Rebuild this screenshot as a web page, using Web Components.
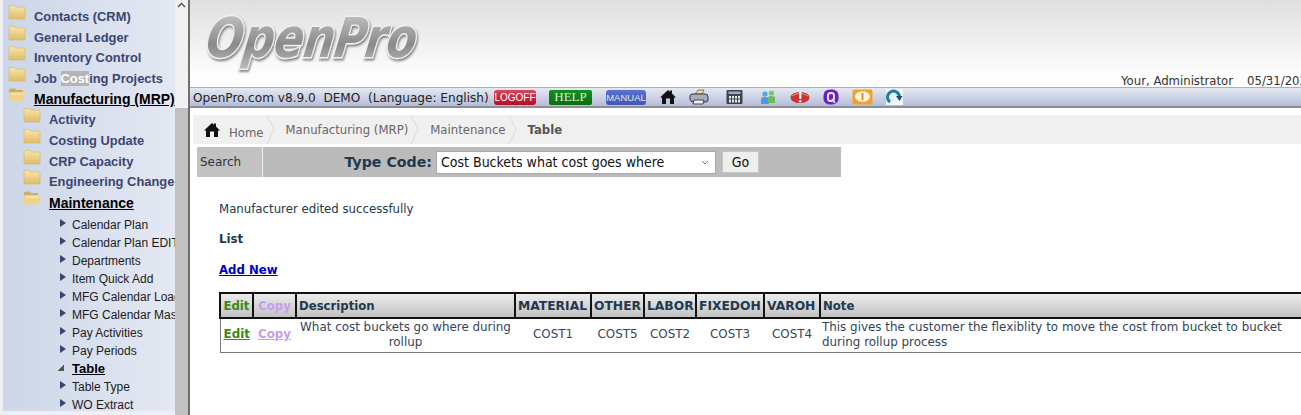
<!DOCTYPE html>
<html>
<head>
<meta charset="utf-8">
<title>OpenPro</title>
<style>
  html, body { margin: 0; height: 415px; overflow: hidden; background: #fff; }
  body { display: flex; font-family: "DejaVu Sans", sans-serif; }
  main-pane { flex: 1; min-width: 0; }
</style>
</head>
<body>
<nav-tree></nav-tree>
<main-pane>
  <top-header></top-header>
  <tool-bar></tool-bar>
  <bread-crumbs></bread-crumbs>
  <search-bar></search-bar>
  <page-body></page-body>
</main-pane>

<script>
const homeIcon = `<path d="M8 1 L10 2.8 V1.5 H12 V4.6 L16 8.4 H14 V15 H10 V9.5 H6 V15 H2 V8.4 H0 Z" fill="#111"/>`;

class NavTree extends HTMLElement {
    constructor() {
        super();
        this.attachShadow({ mode: "open" });
    }

    folder(open) {
        if (open) {
            return `<svg width="18" height="15" viewBox="0 0 18 15"><path d="M1 2 L2 0.5 H7 L8 2 H15 V5 H1 Z" fill="#c9ad6a"/><path d="M1 13.5 V5 Q1 4 3 4 H16 Q18 4 17 6 L15.5 13.5 Z" fill="#eed48a"/><path d="M3 6 H16" stroke="#fbeebb"/></svg>`;
        }
        return `<svg width="18" height="15" viewBox="0 0 18 15"><defs><linearGradient id="f" x1="0" y1="0" x2="0" y2="1"><stop offset="0" stop-color="#f8e6a8"/><stop offset="1" stop-color="#dfbd68"/></linearGradient></defs><path d="M1 1.5 Q1 0.5 2 0.5 H7 L8 2 H16 Q17 2 17 3 V14 H1 Z" fill="url(#f)" stroke="#d2b46c" stroke-width=".6"/></svg>`;
    }

    connectedCallback() {
        const top = ["Contacts (CRM)", "General Ledger", "Inventory Control"];
        const sub = ["Activity", "Costing Update", "CRP Capacity", "Engineering Change"];
        const leaves = ["Calendar Plan", "Calendar Plan EDIT", "Departments", "Item Quick Add", "MFG Calendar Load", "MFG Calendar Master", "Pay Activities", "Pay Periods"];
        const row = (cls, label, open) => `<div class="row ${cls}${open ? " open" : ""}"><span class="ic">${this.folder(open)}</span><a>${label}</a></div>`;
        const leaf = (label) => `<div class="leaf"><i></i><span>${label}</span></div>`;
        this.shadowRoot.innerHTML = `
            <style>
                :host { display: flex; flex: none; width: 190px; height: 415px; box-sizing: border-box; border-right: 2px solid #6f6f6f; background: #f1f1f1; }
                .tree { width: 175px; height: 100%; overflow: hidden; box-sizing: border-box; padding: 6px 0 0 0; border-left: 3px solid #eef0f5;
                    background: linear-gradient(transparent 410px, #edf0f6 412px), linear-gradient(90deg, #ccd6e8, #e4e8f3); font-family: "Liberation Sans", Arial, sans-serif; }
                .row { display: flex; height: 20.7px; align-items: center; white-space: nowrap; font-weight: bold; font-size: 12.9px; color: #3b4572; }
                .row .ic { width: 26px; flex: none; display: flex; margin-left: 5px; position: relative; top: -4px; }
                .row.l2 { padding-left: 15px; }
                .row.open a { color: #000; text-decoration: underline; font-size: 14px; }
                .leaves { padding: 3px 0 0 57px; }
                .leaf { display: flex; align-items: center; height: 18px; white-space: nowrap; font-size: 12px; color: #1c1c1c; }
                .leaf i { flex: none; width: 0; height: 0; margin: -3px 6px 0 0; border-left: 6px solid #33486e; border-top: 4.5px solid transparent; border-bottom: 4.5px solid transparent; }
                .leaf.on i { width: 6px; height: 7px; border: 0; background: linear-gradient(135deg, transparent 50%, #555 50%); margin: -2px 8px 0 -2px; }
                .leaf.on span { font-weight: bold; font-size: 13px; color: #000; text-decoration: underline; }
                .bar { flex: none; width: 13px; background: #f1f1f1; display: flex; flex-direction: column; }
                .arrow { height: 108px; display: flex; justify-content: center; padding-top: 2px; box-sizing: border-box; }
                .thumb { flex: 1; background: #c1c1c1; }
            </style>
            <div class="tree">
                ${top.map((t) => row("l1", t)).join("")}
                <div class="row l1"><span class="ic">${this.folder()}</span><a>Job <span style="background:#b4b4b4;color:#fff">Cost</span>ing Projects</a></div>
                ${row("l1", "Manufacturing (MRP)", true)}
                ${sub.map((t) => row("l2", t)).join("")}
                ${row("l2", "Maintenance", true)}
                <div class="leaves">
                    ${leaves.map(leaf).join("")}
                    <div class="leaf on"><i></i><span>Table</span></div>
                    ${leaf("Table Type")}
                    ${leaf("WO Extract")}
                </div>
            </div>
            <div class="bar">
                <div class="arrow"><svg width="9" height="6" viewBox="0 0 9 6"><path d="M1 5 L4.5 1.5 L8 5" fill="none" stroke="#505050" stroke-width="1.4"/></svg></div>
                <div class="thumb"></div>
            </div>
        `;
    }
}

class TopHeader extends HTMLElement {
    constructor() {
        super();
        this.attachShadow({ mode: "open" });
    }

    connectedCallback() {
        this.shadowRoot.innerHTML = `
            <style>
                :host { display: flex; height: 87px; justify-content: space-between; align-items: flex-end;
                    background: linear-gradient(#dfdfdf, #fdfdfd 85%); overflow: hidden; }
                svg { display: block; margin-left: 8px; margin-bottom: 5px; }
                .user { flex: none; display: flex; gap: 14px; width: 180px; white-space: nowrap; font-size: 11.7px; color: #333; line-height: 13px; margin-bottom: -1px; }
            </style>
            <svg width="230" height="78" viewBox="0 0 230 78">
                <defs><linearGradient id="lg" x1="0" y1="0" x2="0" y2="1"><stop offset="0" stop-color="#cfcfcf"/><stop offset=".6" stop-color="#8a8a8a"/><stop offset="1" stop-color="#bdbdbd"/></linearGradient>
                <filter id="sh" x="-5%" y="-5%" width="110%" height="125%"><feDropShadow dx="1" dy="2" stdDeviation="1.2" flood-color="#555" flood-opacity=".7"/></filter></defs>
                <g filter="url(#sh)"><text transform="skewX(-8)" x="14" y="53" font-family="DejaVu Sans" font-weight="bold" font-style="italic" font-size="55" textLength="210" lengthAdjust="spacingAndGlyphs" fill="url(#lg)" stroke="#f0f0f0" stroke-width="3" paint-order="stroke">OpenPro</text></g>
            </svg>
            <div class="user"><span>Your, Administrator</span><span>05/31/2021</span></div>
        `;
    }
}

class ToolBar extends HTMLElement {
    constructor() {
        super();
        this.attachShadow({ mode: "open" });
    }

    connectedCallback() {
        this.shadowRoot.innerHTML = `
            <style>
                :host { display: flex; align-items: center; height: 21px; box-sizing: border-box; padding-left: 3px;
                    border-top: 1px solid #aeb0b8; border-bottom: 2px solid #8b8d98;
                    background: linear-gradient(#e6e9f2, #b5bdd8); white-space: nowrap; font-size: 12.1px; color: #222; }
                .ver { white-space: pre; width: 300px; flex: none; padding-top: 1px; }
                .btn { flex: none; display: flex; align-items: center; justify-content: center; height: 15px; box-sizing: border-box; border-radius: 2px; color: #fff; }
                .logoff { width: 42px; margin-left: 1px; background: linear-gradient(#d9485a, #b30d24); font: 10px "Liberation Sans", sans-serif; border-radius: 3px; }
                .help { width: 43px; margin-left: 13px; background: linear-gradient(#129020, #0b6c12); font: 13px "Liberation Serif", serif; color: #d5f0d5; }
                .manual { width: 40px; margin-left: 14px; background: linear-gradient(#5a70cc, #4257b5); font: 9.5px "Liberation Sans", sans-serif; border-radius: 3px; color: #dfe4fa; }
                .icons { display: flex; align-items: center; }
                svg { display: block; flex: none; }
            </style>
            <span class="ver">OpenPro.com v8.9.0  DEMO  (Language: English)</span>
            <span class="btn logoff">LOGOFF</span>
            <span class="btn help">HELP</span>
            <span class="btn manual">MANUAL</span>
            <div class="icons">
                <svg style="margin-left:14px" width="16" height="16" viewBox="0 0 16 16">${homeIcon}</svg>
                <svg style="margin-left:13px" width="20" height="16" viewBox="0 0 20 16"><path d="M6 5 L9 1 H15 L13 5 Z" fill="#efe48c" stroke="#555" stroke-width=".7"/><path d="M1 7 Q1 5 4 5 H16 Q19 5 19 8 V11 Q19 13 16 13 H5 Q1 13 1 10 Z" fill="#a9aeb8" stroke="#334" stroke-width="1"/><path d="M5 11 H15 L14 15 H4 Z" fill="#eee" stroke="#334" stroke-width=".9"/></svg>
                <svg style="margin-left:17px" width="17" height="16" viewBox="0 0 17 16"><rect x="0.5" y="1" width="16" height="14" rx="1" fill="#3c4250"/><rect x="2.5" y="2.5" width="12" height="2.5" fill="#8fb0d0"/><path d="M3 7 H14 V13.5 H3 Z" fill="#e8e8e8"/><path d="M5.5 7 V14 M8.5 7 V14 M11.5 7 V14 M3 10 H14" stroke="#3c4250" stroke-width="1"/></svg>
                <svg style="margin-left:17px" width="16" height="16" viewBox="0 0 16 16"><circle cx="5" cy="5" r="2.6" fill="#58a6e0"/><path d="M1 15 V10 Q1 8 5 8 Q9 8 9 10 V15 Z" fill="#4a9ade"/><circle cx="11.5" cy="4" r="2.6" fill="#7cc76a"/><path d="M8 14 V9 Q8 7 11.5 7 Q15 7 15 9 V14 Z" fill="#6cbb62"/></svg>
                <svg style="margin-left:14px" width="20" height="16" viewBox="0 0 20 16"><ellipse cx="10" cy="8.5" rx="9.5" ry="5.5" fill="#c9352a"/><path d="M2 7 Q10 2 18 7" fill="none" stroke="#f09080"/><rect x="9" y="2" width="2.4" height="8" rx="1" fill="#fff"/><circle cx="10.2" cy="12.2" r="1.3" fill="#fff"/></svg>
                <svg style="margin-left:13px" width="16" height="16" viewBox="0 0 16 16"><rect x="0.5" y="0.5" width="15" height="15" rx="6" fill="#6a1fc8"/><rect x="5" y="4" width="6" height="8" rx="2.5" fill="none" stroke="#e8e0ff" stroke-width="2"/><path d="M9 10 L12 14" stroke="#e8e0ff" stroke-width="1.6"/></svg>
                <svg style="margin-left:13px" width="21" height="16" viewBox="0 0 21 16"><rect x="0.5" y="0.5" width="20" height="15" rx="2" fill="#f2a12e"/><ellipse cx="10.5" cy="7.5" rx="7.5" ry="5.2" fill="#fff3d6"/><rect x="9.6" y="4" width="1.8" height="7" fill="#d9802a"/></svg>
                <svg style="margin-left:13px" width="17" height="16" viewBox="0 0 17 16"><rect width="17" height="16" fill="#eef4f8"/><path d="M4 13 A6 6 0 1 1 13.5 7.5" fill="none" stroke="#1f7fa0" stroke-width="3"/><path d="M10 7 H16.5 L13.5 12 Z" fill="#174f70"/></svg>
            </div>
        `;
    }
}

class BreadCrumbs extends HTMLElement {
    constructor() {
        super();
        this.attachShadow({ mode: "open" });
    }

    connectedCallback() {
        const chev = `<svg class="chev" width="9" height="29" viewBox="0 0 9 29"><path d="M1 0 L8 14.5 L1 29" fill="none" stroke="#dcdcdc"/></svg>`;
        this.shadowRoot.innerHTML = `
            <style>
                :host { display: flex; align-items: center; height: 29px; margin: 7px 0 0 3px; background: #f0f0f0; font-size: 11.7px; color: #666; white-space: nowrap; }
                .home { display: flex; align-items: center; gap: 9px; margin-left: 11px; }
                .chev { margin: 0 11px 0 2px; flex: none; }
                b { color: #555; }
                .home span { position: relative; top: 3px; }
            </style>
            <div class="home"><svg width="16" height="16" viewBox="0 0 16 16">${homeIcon}</svg><span>Home</span></div>
            ${chev}<span>Manufacturing (MRP)</span>
            ${chev}<span>Maintenance</span>
            ${chev}<b>Table</b>
        `;
    }
}

class SearchBar extends HTMLElement {
    constructor() {
        super();
        this.attachShadow({ mode: "open" });
    }

    connectedCallback() {
        this.shadowRoot.innerHTML = `
            <style>
                :host { display: flex; align-items: center; width: 644px; height: 30px; margin: 3px 0 0 7px; background: #bbb; font-size: 12px; color: #333; }
                .label { flex: none; width: 62px; height: 100%; display: flex; align-items: center; padding-left: 3px; border-right: 1px solid #eee; background: #c2c2c2; }
                .code { flex: none; width: 169px; text-align: right; font-weight: bold; font-size: 14.2px; color: #22384f; white-space: nowrap; }
                .select { flex: none; display: flex; align-items: center; justify-content: space-between; width: 280px; height: 23px; margin-left: 4px; box-sizing: border-box; padding: 0 6px 0 4px; background: #fff; border: 1px solid #aaa; font-size: 14px; font-stretch: condensed; color: #111; white-space: nowrap; }
                .go { flex: none; display: flex; align-items: center; justify-content: center; width: 37px; height: 22px; margin-left: 6px; background: #eee; border: 1px solid #c6c6c6; box-sizing: border-box; font-size: 14px; font-stretch: condensed; color: #111; }
            </style>
            <div class="label">Search</div>
            <div class="code">Type Code:</div>
            <div class="select"><span>Cost Buckets what cost goes where</span><svg width="8" height="5" viewBox="0 0 8 5"><path d="M1 1 L4 4 L7 1" fill="none" stroke="#777"/></svg></div>
            <div class="go">Go</div>
        `;
    }
}

class PageBody extends HTMLElement {
    constructor() {
        super();
        this.attachShadow({ mode: "open" });
    }

    connectedCallback() {
        this.shadowRoot.innerHTML = `
            <style>
                :host { display: block; padding: 24px 0 0 29px; font-size: 11.75px; color: #22384f; white-space: nowrap; }
                p { margin: 0; line-height: 16px; }
                .list { font-weight: bold; margin-top: 14px; }
                .add { font-weight: bold; margin: 15px 0 14px; color: #0000c8; text-decoration: underline; }
            </style>
            <p>Manufacturer edited successfully</p>
            <p class="list">List</p>
            <p class="add">Add New</p>
            <cost-table></cost-table>
        `;
    }
}

class CostTable extends HTMLElement {
    constructor() {
        super();
        this.attachShadow({ mode: "open" });
    }

    connectedCallback() {
        const cols = [33, 43, 219, 76, 53, 52, 68, 56, 520];
        this.shadowRoot.innerHTML = `
            <style>
                :host { display: block; width: 1120px; }
                table { table-layout: fixed; border-collapse: collapse; width: 1120px; font-size: 11.9px; color: #33465c; }
                th { height: 25px; padding: 0 2px; box-sizing: border-box; text-align: left; border: 2px solid #111; background: linear-gradient(#ececec, #c2c2c2); font-size: 11.7px; color: #22384f; white-space: nowrap; overflow: hidden; }
                th.caps { font-size: 12.3px; }
                th.edit, th.copy { text-align: center; }
                td { height: 34px; box-sizing: border-box; padding: 0 2px 1px; text-align: center; line-height: 15px; border-bottom: 1px solid #777; white-space: normal; }
                td:first-child { border-left: 1px solid #777; }
                td:last-child { text-align: left; }
                .edit { color: #3a8a12; font-weight: bold; }
                .copy { color: #c79cf0; font-weight: bold; }
                td .edit, td .copy { text-decoration: underline; }
            </style>
            <table>
                <colgroup>${cols.map((w) => `<col style="width:${w}px">`).join("")}</colgroup>
                <tr>
                    <th class="edit">Edit</th><th class="copy">Copy</th><th>Description</th><th class="caps">MATERIAL</th><th class="caps">OTHER</th><th class="caps">LABOR</th><th class="caps">FIXEDOH</th><th class="caps">VAROH</th><th>Note</th>
                </tr>
                <tr>
                    <td><span class="edit">Edit</span></td><td><span class="copy">Copy</span></td>
                    <td>What cost buckets go where during rollup</td>
                    <td>COST1</td><td>COST5</td><td>COST2</td><td>COST3</td><td>COST4</td>
                    <td>This gives the customer the flexiblity to move the cost from bucket to bucket<br>during rollup process</td>
                </tr>
            </table>
        `;
    }
}

customElements.define("nav-tree", NavTree);
customElements.define("top-header", TopHeader);
customElements.define("tool-bar", ToolBar);
customElements.define("bread-crumbs", BreadCrumbs);
customElements.define("search-bar", SearchBar);
customElements.define("page-body", PageBody);
customElements.define("cost-table", CostTable);
</script>
</body>
</html>
